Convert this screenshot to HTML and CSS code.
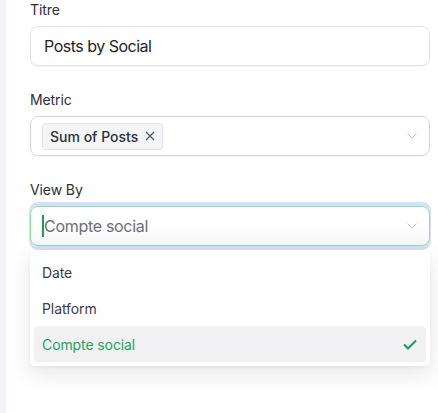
FILE: index.html
```html
<!DOCTYPE html>
<html>
<head>
<meta charset="utf-8">
<title>Widget settings</title>
<link rel="stylesheet" href="styles.css">
</head>
<body>
<div class="panel">
  <div class="field">
    <label class="label">Titre</label>
    <div class="input">Posts by Social</div>
  </div>

  <div class="field">
    <label class="label">Metric</label>
    <div class="input select">
      <span class="tag">Sum of Posts
        <svg class="tag-x" width="10" height="10" viewBox="0 0 10 10"><path d="M1 1L9 9M9 1L1 9" stroke="#555" stroke-width="1.2" fill="none"/></svg>
      </span>
      <svg class="chevron" width="10" height="6" viewBox="0 0 10 6"><path d="M0.5 0.5L5 5L9.5 0.5" stroke="#c4c4c8" stroke-width="1" fill="none"/></svg>
    </div>
  </div>

  <div class="field open">
    <label class="label">View By</label>
    <div class="input select focus">
      <span class="caret"></span><span class="placeholder">Compte social</span>
      <svg class="chevron" width="10" height="6" viewBox="0 0 10 6"><path d="M0.5 0.5L5 5L9.5 0.5" stroke="#c4c4c8" stroke-width="1" fill="none"/></svg>
    </div>
    <ul class="menu">
      <li>Date</li>
      <li>Platform</li>
      <li class="selected">Compte social
        <svg class="check" width="14" height="11" viewBox="0 0 14 11"><path d="M1 5.5L5 9.5L13 1.5" stroke="#16a05a" stroke-width="2" fill="none"/></svg>
      </li>
    </ul>
  </div>
</div>
</body>
</html>
```

FILE: styles.css
```css
html,body{margin:0;padding:0}
body{background:#f2f3f6;font-family:Inter,"Noto Sans",sans-serif;color:#2b2f36}
.panel{margin-left:6px;background:#fff;height:413px;padding:0 8px 0 24px;box-sizing:border-box}
.field{position:relative;margin-bottom:24px}
.label{display:block;font-size:14px;line-height:19px;margin-bottom:7px;color:#2c2f35;letter-spacing:-0.1px}
.input{height:40px;box-sizing:border-box;border:1px solid #e3e3e6;border-radius:8px;padding:0 13px;display:flex;align-items:center;font-size:16px;color:#1f2329;letter-spacing:-0.5px;box-shadow:0 1px 1px rgba(0,0,0,0.04)}
.select{position:relative;padding-left:11px;border-color:#d6d7de}
.chevron{position:absolute;right:12px;top:16px}
.tag{display:flex;align-items:center;height:27px;box-sizing:border-box;padding:0 7px;background:#f4f5f7;border:1px solid #e2e4e9;border-radius:3px;font-size:14px;font-weight:500;color:#2a3140;letter-spacing:0}
.tag-x{margin-left:7px}
.focus{border-color:#86e3a4;background:linear-gradient(#fff 40%,#f7f7f9);box-shadow:0 -3px 0 1px #d5defb,0 3px 0 1px #d5defb;letter-spacing:-0.3px}
.caret{width:2px;height:22px;background:#1a9a55;margin-right:0}
.placeholder{color:#6b6f78}
.menu{position:absolute;left:0;right:0;top:70px;margin:0;padding:4px;list-style:none;background:#fff;border-radius:4px;box-shadow:0 8px 24px rgba(0,0,0,0.10),0 1px 3px rgba(0,0,0,0.06)}
.menu li{height:36px;display:flex;align-items:center;padding:0 8px;font-size:14px;color:#3a3d44;border-radius:4px;letter-spacing:-0.1px}
.menu li.selected{background:#f1f1f3;color:#1ea35e;justify-content:space-between}
.check{margin-right:1px}
```
